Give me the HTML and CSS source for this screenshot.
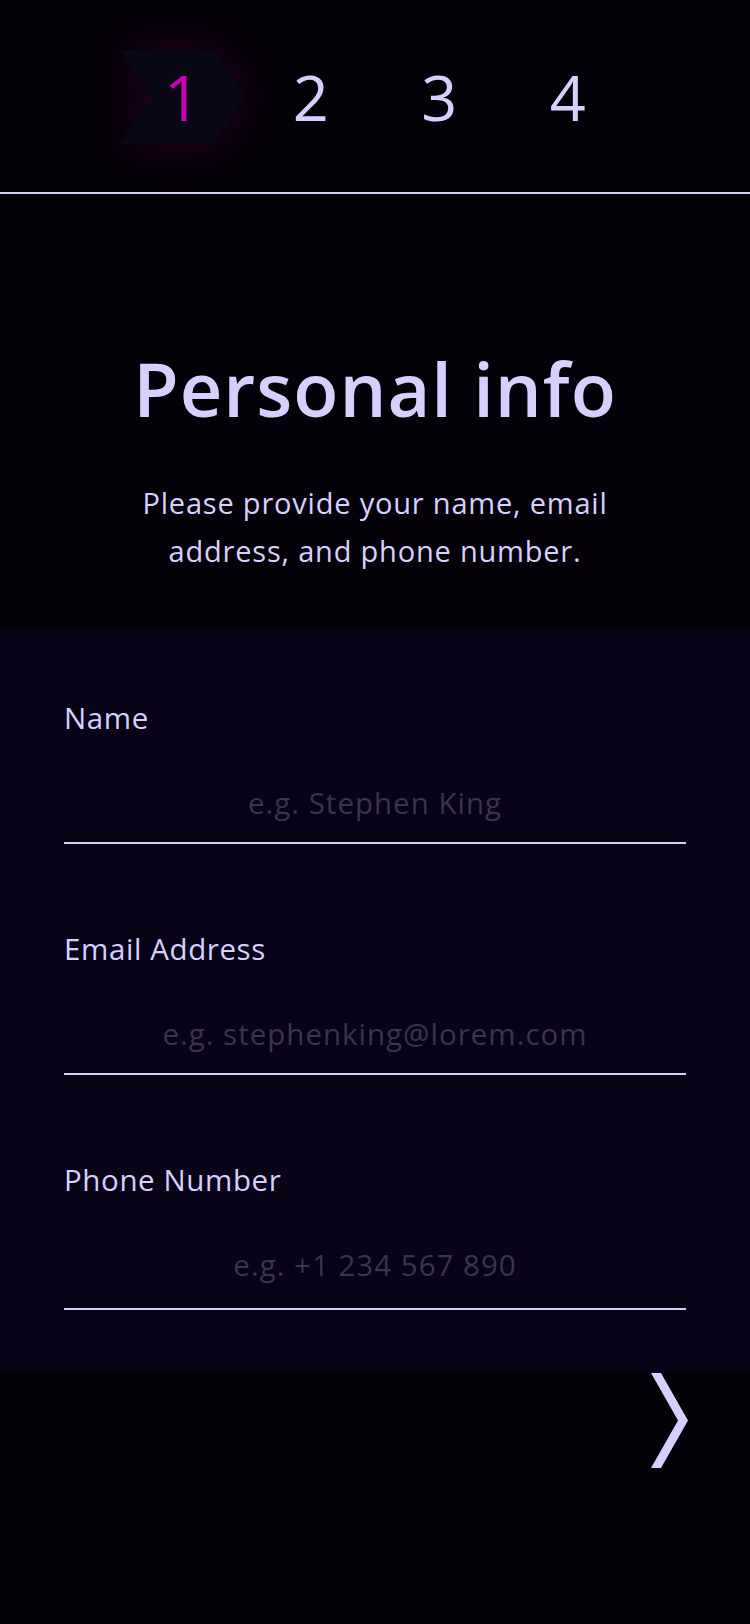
FILE: index.html
```html
<!DOCTYPE html>
<html lang="en">
<head>
<meta charset="utf-8">
<title>Personal info</title>
<link rel="stylesheet" href="styles.css">
</head>
<body>
<main class="page">
  <nav class="steps">
    <div class="step active"><span>1</span></div>
    <div class="step"><span>2</span></div>
    <div class="step"><span>3</span></div>
    <div class="step"><span>4</span></div>
  </nav>

  <header class="intro">
    <h1 class="title">Personal info</h1>
    <p class="subtitle">Please provide your name, email address, and phone number.</p>
  </header>

  <form class="form">
    <div class="field">
      <label class="label" for="name">Name</label>
      <input class="input" id="name" type="text" placeholder="e.g. Stephen King">
    </div>
    <div class="field">
      <label class="label" for="email">Email Address</label>
      <input class="input" id="email" type="email" placeholder="e.g. stephenking@lorem.com">
    </div>
    <div class="field">
      <label class="label" for="phone">Phone Number</label>
      <input class="input input-last" id="phone" type="tel" placeholder="e.g. +1 234 567 890">
    </div>
  </form>

  <div class="actions">
    <button class="next" type="button" aria-label="Next step">
      <svg width="37" height="95" viewBox="0 0 37 95"><polygon points="0,0 10,0 37,47.5 10,95 0,95 27,47.5" fill="#d6d0ff"/></svg>
    </button>
  </div>
</main>
</body>
</html>
```

FILE: styles.css
```css
* { box-sizing: border-box; }

html, body {
  margin: 0;
  padding: 0;
  background: #040108;
}

body {
  font-family: "Open Sans", "Noto Sans", "DejaVu Sans", sans-serif;
  color: #d6d0ff;
  min-height: 1624px;
}

.page {
  display: flex;
  flex-direction: column;
}

/* stepper */
.steps {
  display: flex;
  justify-content: center;
  gap: 4.5px;
  padding: 50px 0 48px;
  border-bottom: 2px solid #d6d0ff;
}

.step {
  position: relative;
  width: 124px;
  height: 94px;
  display: flex;
  align-items: center;
  justify-content: center;
  font-size: 63px;
  line-height: 94px;
  color: #d6d0ff;
}

.step span {
  position: relative;
  z-index: 1;
}

.step.active {
  color: #cc00b4;
  filter: drop-shadow(0 0 22px rgba(110, 0, 90, 0.35));
}

.step.active::before {
  content: "";
  position: absolute;
  inset: 0;
  background: #0a0716;
  clip-path: polygon(0 0, 75.8% 0, 100% 50%, 75.8% 100%, 0 100%, 24.2% 50%);
}

/* intro */
.intro {
  display: flex;
  flex-direction: column;
  align-items: center;
  padding: 158px 0 53px;
  text-align: center;
}

.title {
  margin: 0;
  font-size: 74px;
  line-height: 74px;
  font-weight: 600;
  letter-spacing: 1px;
}

.subtitle {
  margin: 53px 0 0;
  max-width: 520px;
  font-size: 29px;
  line-height: 48px;
  letter-spacing: 0.8px;
}

/* form */
.form {
  display: flex;
  flex-direction: column;
  gap: 87px;
  padding: 72px 64px 63px;
  background: #080316;
}

.field {
  display: flex;
  flex-direction: column;
  gap: 26px;
}

.label {
  font-size: 29.5px;
  line-height: 36px;
  letter-spacing: 0.6px;
}

.input {
  box-sizing: content-box;
  width: 100%;
  height: 80px;
  padding: 0;
  margin: 0;
  border: none;
  border-bottom: 2px solid #d6d0ff;
  background: transparent;
  color: #d6d0ff;
  font-family: inherit;
  font-size: 29.5px;
  letter-spacing: 1px;
  text-align: center;
  outline: none;
}

.input-last {
  padding-bottom: 4px;
}

.input::placeholder {
  color: #3a344f;
}

/* actions */
.actions {
  display: flex;
  justify-content: flex-end;
  padding-right: 62px;
}

.next {
  display: block;
  padding: 0;
  margin: 0;
  border: none;
  background: transparent;
  line-height: 0;
  cursor: pointer;
}
```
